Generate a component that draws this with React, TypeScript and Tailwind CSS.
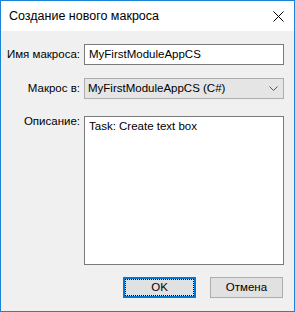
import React from 'react';

export default function App() {
  return (
    <div className="w-[295px] h-[312px] border border-[#1883d7] bg-[#f0f0f0] flex flex-col text-[11.5px] text-black" style={{ fontFamily: '"Liberation Sans", Arial, sans-serif' }}>
      {/* title bar */}
      <div className="h-[30px] bg-white flex items-center justify-between pl-[8px] pr-[10px] shrink-0">
        <span className="text-[12.5px] leading-none">Создание нового макроса</span>
        <svg width="11" height="11" viewBox="0 0 11 11" className="block">
          <path d="M0.5 0.5 L10.5 10.5 M10.5 0.5 L0.5 10.5" stroke="#000" strokeWidth="1" />
        </svg>
      </div>

      <div className="flex flex-col pt-[13px] pr-[10px]">
        <div className="flex items-center h-[21px]">
          <label className="w-[80px] text-right pr-[1px] whitespace-nowrap">Имя макроса:</label>
          <div className="ml-[3px] flex-1 h-[21px] bg-white border border-[#7a7a7a] flex items-center pl-[4px]">
            MyFirstModuleAppCS
          </div>
        </div>

        <div className="flex items-center h-[21px] mt-[13px]">
          <label className="w-[80px] text-right pr-[1px] whitespace-nowrap">Макрос в:</label>
          <div className="ml-[3px] flex-1 h-[21px] bg-[#e5e5e5] border border-[#adadad] flex items-center justify-between pl-[3px] pr-[5px]">
            <span>MyFirstModuleAppCS (C#)</span>
            <svg width="9" height="5" viewBox="0 0 9 5" className="block">
              <path d="M0.5 0.5 L4.5 4.5 L8.5 0.5" stroke="#555" strokeWidth="1" fill="none" />
            </svg>
          </div>
        </div>

        <div className="flex mt-[17px]">
          <label className="w-[80px] text-right pr-[1px] leading-none whitespace-nowrap">Описание:</label>
          <div className="ml-[3px] flex-1 h-[149px] bg-white border border-[#7a7a7a] pl-[4px] pt-[1px]">
            Task: Create text box
          </div>
        </div>

        <div className="flex justify-end gap-[14px] mt-[12px] pr-[1px]">
          <button className="w-[73px] h-[21px] bg-[#e1e1e1] border-2 border-[#0078d7] outline-1 outline-dotted outline-black -outline-offset-3 flex items-center justify-center">
            OK
          </button>
          <button className="w-[73px] h-[21px] bg-[#e1e1e1] border border-[#adadad] flex items-center justify-center">
            Отмена
          </button>
        </div>
      </div>
    </div>
  );
}
